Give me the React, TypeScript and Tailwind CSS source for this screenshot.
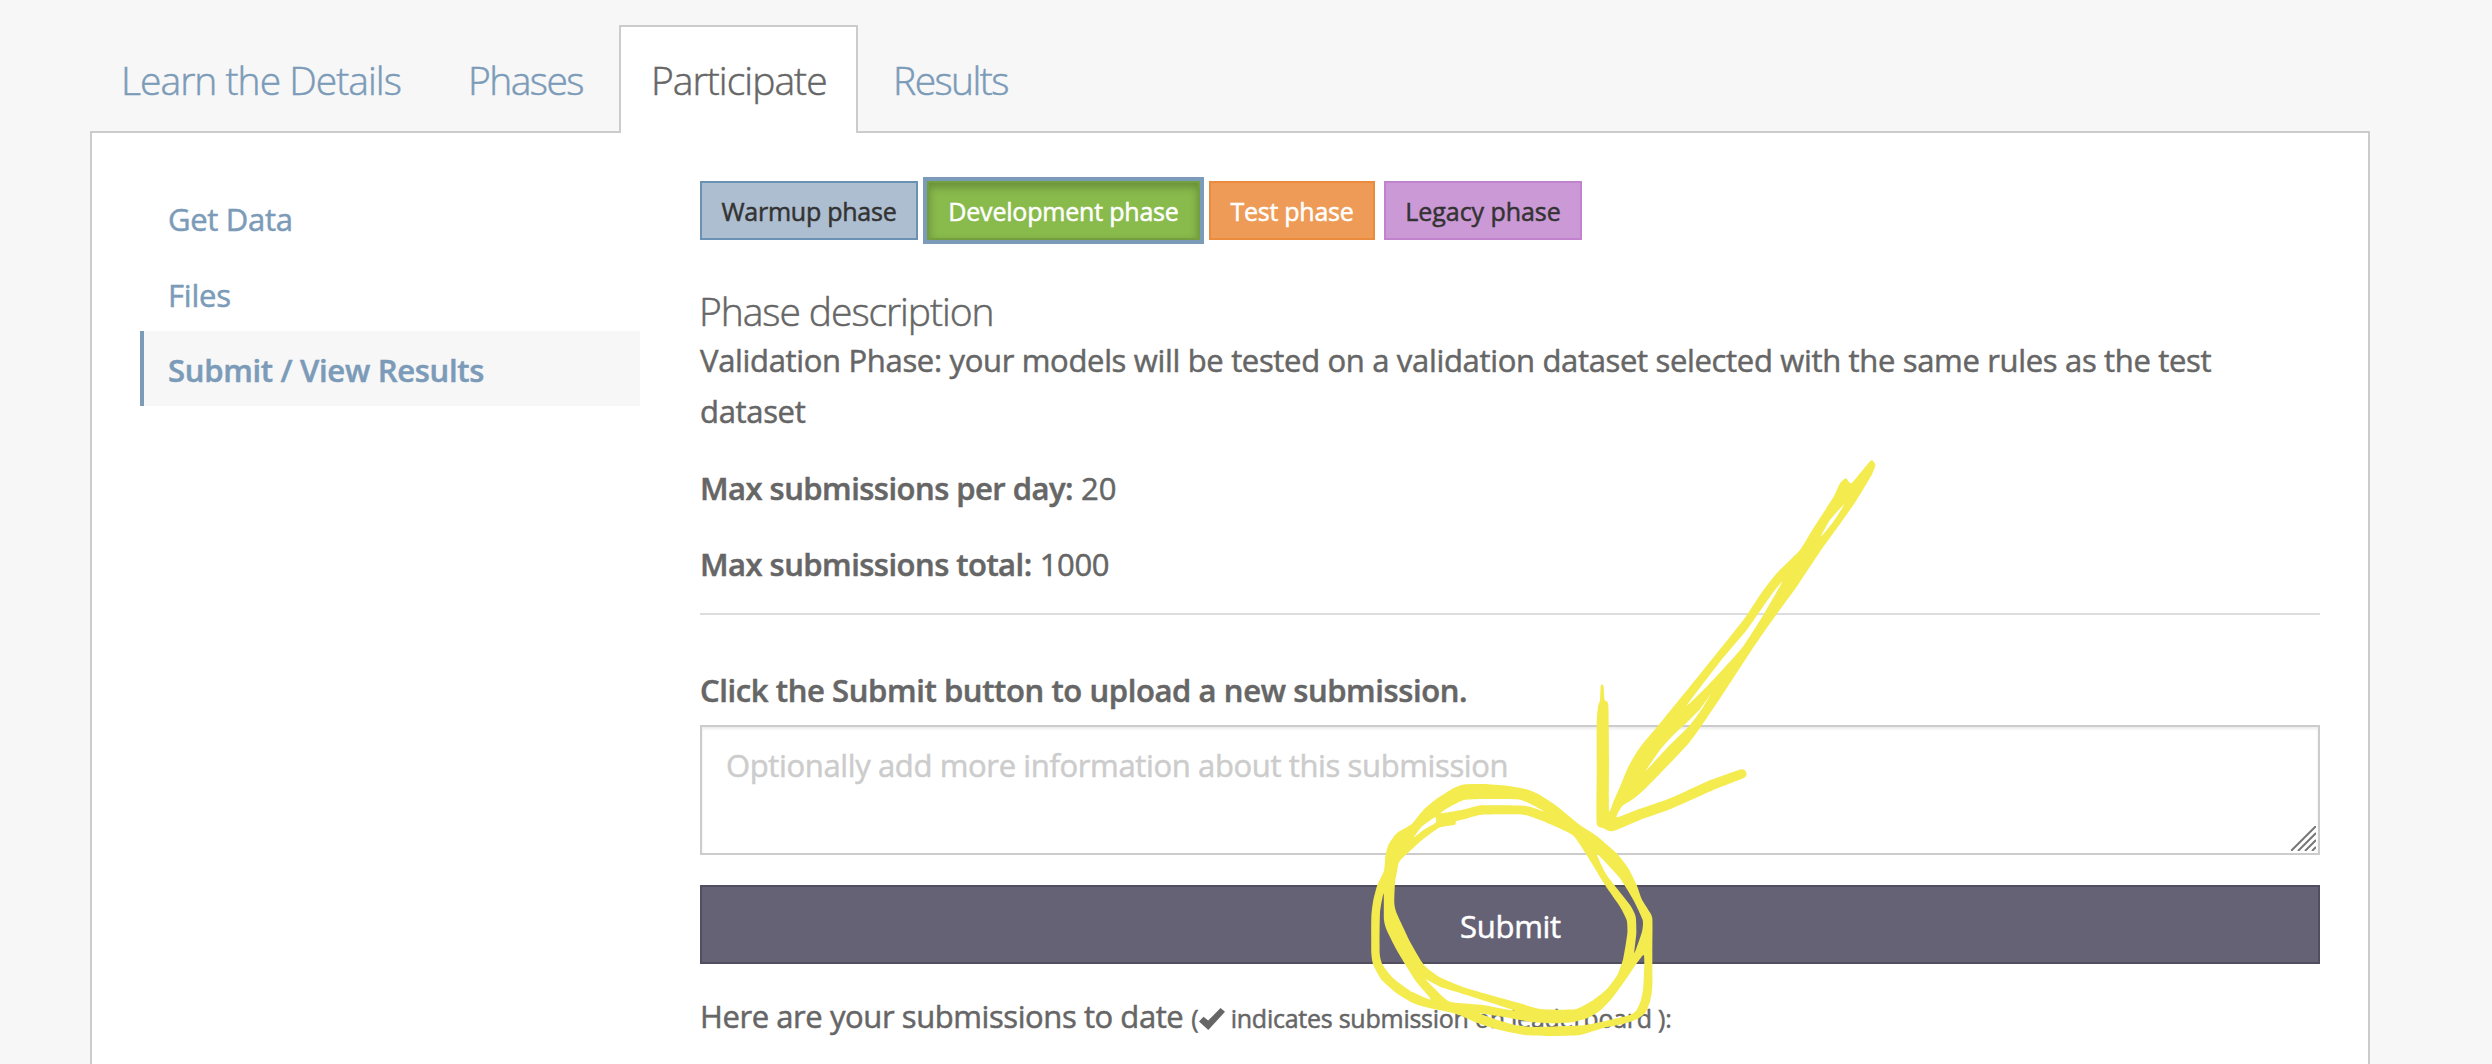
type Point = [number, number];

// Closed, slightly rounded outline through a list of points.
function outline(points: Point[]): string {
  const n = points.length;
  const at = (i: number) => points[(i + n) % n];
  let d = `M${at(0)[0]} ${at(0)[1]}`;
  for (let i = 0; i < n; i++) {
    const [p0, p1, p2, p3] = [at(i - 1), at(i), at(i + 1), at(i + 2)];
    const t = 0.09;
    d += `C${p1[0] + (p2[0] - p0[0]) * t} ${p1[1] + (p2[1] - p0[1]) * t} ${p2[0] - (p3[0] - p1[0]) * t} ${p2[1] - (p3[1] - p1[1]) * t} ${p2[0]} ${p2[1]}`;
  }
  return d + 'Z';
}

const circle: Point[][] = [
  [[215, 372], [250, 330], [285, 300], [340, 265], [375, 253], [430, 252], [500, 257], [560, 268], [600, 285], [650, 318], [720, 375], [770, 408], [830, 460], [865, 505], [890, 555], [905, 597], [925, 630], [937, 655], [937, 760], [937, 860], [930, 905], [915, 940], [890, 958], [850, 972], [790, 984], [720, 1005], [640, 1008], [560, 1006], [480, 990], [410, 968], [370, 950], [330, 937], [270, 925], [220, 910], [170, 880], [125, 840], [100, 795], [94, 760], [94, 650], [100, 600], [112, 555], [132, 512], [136, 470], [145, 435], [170, 400]],
  [[180, 482], [240, 425], [270, 402], [300, 382], [345, 374], [348, 364], [375, 357], [425, 344], [550, 344], [620, 368], [698, 405], [740, 465], [795, 555], [840, 620], [860, 660], [862, 700], [850, 775], [832, 825], [800, 868], [760, 900], [705, 928], [600, 927], [540, 910], [380, 865], [300, 832], [262, 805], [245, 785], [210, 725], [170, 640], [163, 610], [165, 550], [172, 510]],
  [[302, 340], [330, 320], [372, 300], [430, 297], [540, 299], [612, 334], [555, 317], [425, 316], [375, 328]],
  [[222, 412], [245, 380], [285, 352], [287, 368], [250, 390]],
  [[770, 463], [790, 480], [840, 535], [880, 600], [908, 660], [906, 695], [883, 760], [889, 700], [887, 650], [870, 615], [800, 525]],
  [[911, 765], [860, 835], [820, 890], [780, 932], [745, 953], [700, 966], [640, 970], [580, 967], [520, 956], [418, 940], [480, 962], [530, 976], [580, 981], [660, 979], [730, 976], [800, 962], [870, 945], [890, 930], [903, 900], [910, 860]],
  [[131, 580], [120, 640], [119, 760], [128, 795], [160, 835], [210, 872], [272, 898], [225, 840], [170, 750], [140, 690], [132, 660]],
  [[257, 838], [300, 860], [380, 885], [524, 932], [430, 915], [330, 905], [290, 872]],
];

const arrow: Point[][] = [
  [[932, 62], [946, 75], [935, 105], [890, 180], [840, 252], [780, 335], [710, 440], [655, 515], [585, 615], [500, 745], [440, 835], [390, 905], [330, 970], [260, 1042], [225, 1073], [187, 1098], [170, 1132], [230, 1110], [330, 1075], [440, 1025], [545, 988], [560, 1002], [550, 1015], [460, 1050], [330, 1108], [240, 1140], [170, 1170], [150, 1174], [130, 1165], [110, 1150], [110, 1000], [110, 850], [114, 800], [120, 780], [122, 738], [126, 733], [131, 740], [134, 780], [145, 795], [147, 950], [147, 1112], [160, 1085], [180, 1040], [205, 980], [240, 922], [300, 850], [430, 690], [550, 540], [600, 465], [650, 400], [720, 330], [760, 265], [820, 172], [840, 130], [858, 115], [875, 129]],
  [[853, 193], [810, 240], [783, 290], [820, 245]],
  [[667, 425], [630, 470], [560, 570], [480, 665], [380, 797], [450, 730], [545, 625], [610, 525]],
  [[452, 763], [420, 808], [380, 848], [340, 885], [300, 930], [258, 992], [320, 925], [390, 855], [430, 800]],
];

function Annotation() {
  return (
    <svg className="pointer-events-none absolute left-0 top-0" width="2492" height="1064" fill="#f4eb4e" fillRule="evenodd">
      <path transform="translate(1340 700) scale(.33333)" d={circle.map(outline).join('')} />
      <path transform="translate(1560 440) scale(.33333)" d={arrow.map(outline).join('')} />
    </svg>
  );
}

function Tabs() {
  return (
    <nav className="relative z-10 ml-[90px] flex h-[108px] text-[39px] font-light text-[#7b9bb8]">
      <a className="flex w-[347px] items-center pl-[31px] pt-[2px] tracking-[-0.98px]">Learn the Details</a>
      <a className="flex w-[182px] items-center pl-[31px] pt-[2px] tracking-[-1.55px]">Phases</a>
      <a className="flex w-[239px] items-center border-2 border-b-0 border-[#ccc] bg-white pl-[30px] tracking-[-0.96px] text-[#666]">
        Participate
      </a>
      <a className="flex items-center pl-[35px] pt-[2px] tracking-[-1.55px]">Results</a>
    </nav>
  );
}

function Sidebar() {
  return (
    <aside className="ml-12 w-[500px] pt-[47px] text-[31px] text-[#7b9bb8]">
      <a className="flex h-[76px] items-center pl-[28px] pt-[2px] tracking-[-0.3px]">Get Data</a>
      <a className="flex h-[75px] items-center pl-[28px] pt-[4px] tracking-[-0.2px]">Files</a>
      <a className="flex h-[75px] items-center border-l-4 border-[#7b9bb8] bg-[#f7f7f7] pl-[24px] pt-[4px] font-semibold tracking-[-0.3px]">
        Submit / View Results
      </a>
    </aside>
  );
}

function Phases() {
  return (
    <div className="flex h-[59px] gap-[9px] text-[25px] text-[#333]">
      <button className="w-[218px] border-2 border-[#6b92b3] bg-[#adbed0] pt-px tracking-[-0.25px]">Warmup phase</button>
      <button className="w-[273px] border-2 border-[#749f3f] bg-[#89ba4c] pt-px tracking-[-0.2px] text-white shadow-[inset_0_4px_8px_rgba(0,0,0,0.25)] outline-4 outline-[#7b9bb8]">
        Development phase
      </button>
      <button className="w-[166px] border-2 border-[#ea8b3e] bg-[#ed9b56] pt-px tracking-[-0.25px] text-white">Test phase</button>
      <button className="w-[198px] border-2 border-[#c183ce] bg-[#cb99d5] pt-px tracking-[-0.05px]">Legacy phase</button>
    </div>
  );
}

function Content() {
  return (
    <main className="ml-[60px] w-[1620px] pt-12 text-[31px] leading-[51px] text-[#666]">
      <Phases />
      <h3 className="-ml-px mt-[47px] text-[39px] font-light leading-[48px] tracking-[-1.06px]">Phase description</h3>
      <p className="w-[1560px] tracking-[-0.33px]">
        Validation Phase: your models will be tested on a validation dataset selected with the same rules as the test dataset
      </p>
      <p className="mt-[26px]">
        <b className="font-semibold tracking-[-0.52px]">Max submissions per day:</b> 20
      </p>
      <p className="mt-[25px]">
        <b className="font-semibold tracking-[-0.52px]">Max submissions total:</b> <span className="tracking-[-0.4px]">1000</span>
      </p>
      <hr className="mt-[23px] border-t-2 border-[#ddd]" />
      <p className="mt-[50px] font-semibold tracking-[-0.39px]">Click the Submit button to upload a new submission.</p>
      <div className="relative mt-[9px] h-[130px] border-2 border-[#ccc] bg-white pl-[24px] pt-[13px] tracking-[-0.37px] text-[#ccc] shadow-[inset_0_2px_3px_rgba(0,0,0,0.08)]">
        Optionally add more information about this submission
        <svg className="absolute bottom-0.5 right-0.5" width="25" height="25" stroke="#777" strokeWidth="2">
          <path d="M0 25 25 0M7 25 25 7M14 25 25 14M21 25 25 21" />
        </svg>
      </div>
      <button className="mt-[30px] block h-[79px] w-full border-2 border-[#524e5f] bg-[#666275] pl-px pt-[3px] tracking-[-0.3px] text-white">Submit</button>
      <p className="mt-[27px] flex items-baseline whitespace-pre">
        <span className="tracking-[-0.42px]">Here are your submissions to date</span>
        <span className="ml-2 text-[25px]">(</span>
        <svg className="mt-[17px] self-start" width="26" height="22" viewBox="0 0 26 22" fill="#666">
          <path d="M0 13.5 4.5 8.7 9.2 12.6 21.5 0 26 3.8 9.3 22Z" />
        </svg>
        <span className="ml-[6px] text-[25px] tracking-[-0.25px]">indicates submission on leaderboard ):</span>
      </p>
    </main>
  );
}

export default function App() {
  return (
    <div className="relative h-[1064px] w-[2492px] overflow-hidden bg-[#f7f7f7] pt-[25px] font-['Open_Sans',sans-serif] [-webkit-text-stroke:0.5px]">
      <Tabs />
      <div className="-mt-0.5 ml-[90px] flex h-[1000px] w-[2280px] border-2 border-[#ccc] bg-white">
        <Sidebar />
        <Content />
      </div>
      <Annotation />
    </div>
  );
}
